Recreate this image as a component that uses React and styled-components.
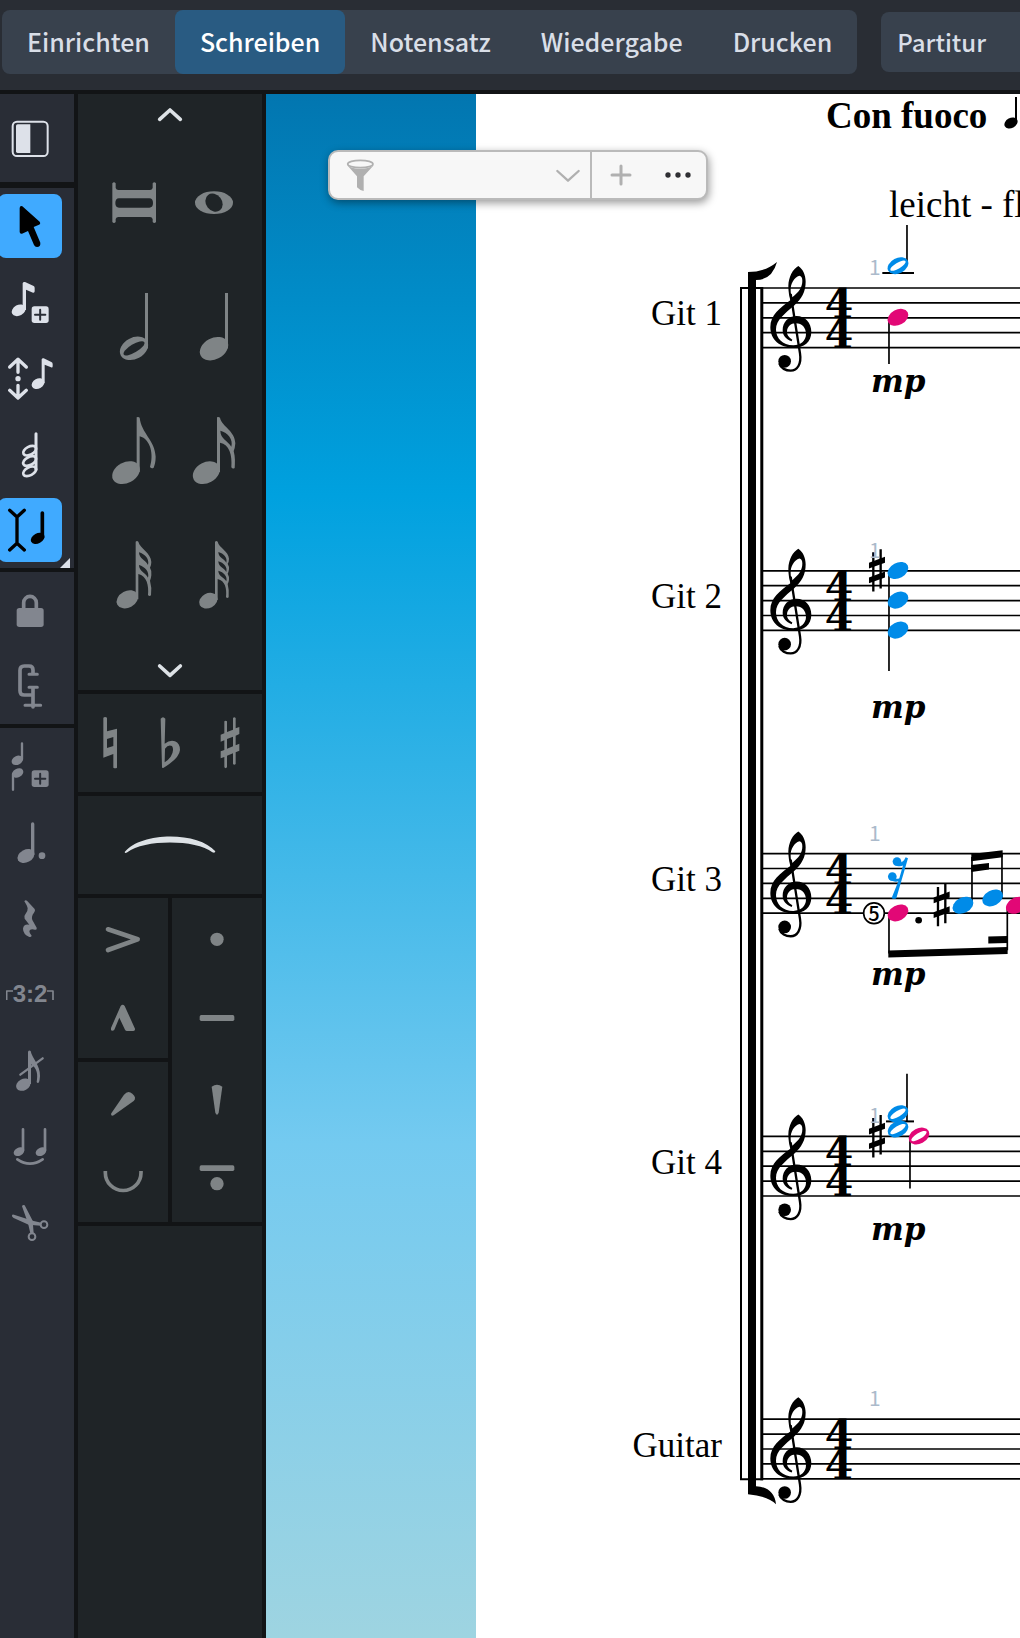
import React from 'react';
import styled, { createGlobalStyle } from 'styled-components';

const GlobalStyle = createGlobalStyle`
  * {
    box-sizing: border-box;
  }
  body {
    margin: 0;
    background: #121416;
    font-family: "Noto Sans CJK SC", "Noto Sans", sans-serif;
  }
  button, select, input {
    font: inherit;
    color: inherit;
    border: 0;
    margin: 0;
    padding: 0;
    background: none;
  }
  svg {
    display: block;
    flex-shrink: 0;
  }
`;

const Window = styled.div`
  display: flex;
  flex-direction: column;
  min-height: 100vh;
  overflow: hidden;
`;

const TopBar = styled.header`
  display: flex;
  align-items: center;
  gap: 24px;
  height: 94px;
  padding: 0 0 6px 2px;
  background: #292d34;
  border-bottom: 4px solid #121416;
  overflow: hidden;
`;

const Tabs = styled.nav`
  display: flex;
  flex-shrink: 0;
  border-radius: 8px;
  background: #38414d;
`;

const Tab = styled.button`
  height: 64px;
  padding: 0 25px 2px;
  border-radius: 8px;
  font-size: 25px;
  font-weight: 500;
  line-height: 32px;
  color: ${(p) => (p.$active ? '#ffffff' : '#d9dee7')};
  background: ${(p) => (p.$active ? '#295b82' : 'transparent')};
`;

const LayoutSelect = styled.select`
  appearance: none;
  flex: 1 0 240px;
  height: 60px;
  padding: 0 16px 2px;
  border-radius: 8px;
  font-size: 24px;
  font-weight: 500;
  color: #d9dee7;
  background: #38414d;
`;

const Main = styled.main`
  display: flex;
  flex: 1;
  gap: 4px;
`;

const Toolbox = styled.div`
  display: flex;
  flex-direction: column;
  gap: 4px;
  width: 74px;
  flex-shrink: 0;
`;

const ToolGroup = styled.div`
  position: relative;
  display: flex;
  flex-direction: column;
  gap: 12px;
  padding: ${(p) => (p.$roomy ? '12px 0' : '6px 0')};
  margin-bottom: ${(p) => (p.$roomy ? '2px' : '0')};
  flex: ${(p) => (p.$grow ? 1 : 'none')};
  background: #292d36;
`;

const Tool = styled.button`
  display: flex;
  align-items: center;
  justify-content: center;
  width: 64px;
  height: 64px;
  margin-left: -2px;
  border-radius: 8px;
  background: ${(p) => (p.$active ? '#40aaff' : 'transparent')};
  color: ${(p) => (p.$active ? '#000000' : p.disabled ? '#82868f' : '#dde1e9')};
`;

const Corner = styled.span`
  position: absolute;
  right: 4px;
  bottom: 0;
  border-left: 10px solid transparent;
  border-bottom: 10px solid #dde1e9;
`;

const TupletText = styled.span`
  font-family: "Liberation Sans", Arial, sans-serif;
  font-size: 24px;
  font-weight: 700;
  line-height: 24px;
`;

const Palette = styled.div`
  display: flex;
  flex-direction: column;
  gap: 4px;
  width: 184px;
  flex-shrink: 0;
`;

const Box = styled.div`
  display: flex;
  flex-direction: ${(p) => (p.$row ? 'row' : 'column')};
  align-items: center;
  justify-content: center;
  flex: ${(p) => (p.$grow ? 1 : 'none')};
  background: #1f2427;
`;

const NoteBox = styled(Box)`
  height: 596px;
  padding-top: 2px;
  justify-content: flex-start;
`;

const NoteGrid = styled.div`
  display: grid;
  grid-template-columns: 80px 80px;
  margin: 7px 0 15px 8px;
`;

const Cell = styled.button`
  color: #7f8486;
`;

const Arrow = styled.button`
  width: 184px;
  height: 38px;
  color: #dde2e6;

  svg {
    margin: 0 auto;
  }
`;

const Articulations = styled.div`
  display: grid;
  grid-template-columns: 90px 90px;
  gap: 4px;
`;

const Column = styled.div`
  display: flex;
  flex-direction: column;
  gap: 4px;
`;

const Canvas = styled.section`
  position: relative;
  display: flex;
  flex: 1;
  min-width: 0;
  padding-left: 210px;
  overflow: hidden;
  background: linear-gradient(#0276b0 0%, #00a1df 26%, #74caf0 68%, #9ed4e1 100%);
`;

const Sheet = styled.div`
  display: flex;
  flex: 1;
  min-width: 0;
  background: #ffffff;
`;

const Players = styled.div`
  width: 246px;
  flex-shrink: 0;
  padding-top: 78px;
  margin-right: 14px;
`;

const Player = styled.div`
  display: flex;
  align-items: center;
  justify-content: flex-end;
  height: 283px;
  font-family: "Liberation Serif", "Times New Roman", serif;
  font-size: 35px;
  line-height: 36px;
  color: #000000;
`;

const Score = styled.svg`
  flex: 1;
  min-width: 0;
  height: 1480px;
`;

const FilterBar = styled.div`
  position: absolute;
  top: 56px;
  left: 62px;
  display: flex;
  width: 380px;
  height: 50px;
  border: 2px solid #bababa;
  border-radius: 10px;
  background: #f7f7f7;
  box-shadow: 1px 3px 8px rgba(0, 0, 0, 0.4);
  color: #b0b0b0;
`;

const FilterField = styled.label`
  display: flex;
  align-items: center;
  flex: 1;
  min-width: 0;
  padding: 0 9px 0 16px;
  border-right: 2px solid #bababa;
`;

const FilterInput = styled.input`
  flex: 1;
  min-width: 0;
  height: 40px;
  padding: 0 8px;
  font-size: 20px;
  outline: none;
`;

const FilterButton = styled.button`
  display: flex;
  align-items: center;
  justify-content: center;
  flex-shrink: 0;
  width: ${(p) => (p.$small ? '26px' : '57px')};
`;

// All icons are drawn on a grid three times finer than the screen.
const Icon = ({ x, y, w, h, children }) => (
  <svg width={w} height={h} viewBox={`${x} ${y} ${w * 3} ${h * 3}`} fill="currentColor" aria-hidden="true">
    {children}
  </svg>
);

const Line = (props) => (
  <path fill="none" stroke="currentColor" strokeLinecap="round" strokeLinejoin="round" {...props} />
);

const Head = ({ x, y, rx = 33, ry = 23, fill, half, hole = '#fff' }) => (
  <g transform={`translate(${x} ${y})`}>
    <ellipse rx={rx} ry={ry} transform="rotate(-28)" fill={fill} />
    {half && <ellipse rx={rx * 0.8} ry={ry * 0.38} transform="rotate(-31)" fill={hole} />}
  </g>
);

const PlusBox = ({ y }) => (
  <g>
    <rect x="95" y={y} width="51" height="50" rx="8" />
    <path d={`M120.500 ${y + 10}v30M105 ${y + 25}h31`} stroke="#292d36" strokeWidth="6" strokeLinecap="round" />
  </g>
);

const tools = [
  {
    roomy: true,
    items: [
      {
        name: 'Panel',
        y: 48,
        icon: (
          <>
            <rect x="38" y="95" width="105" height="103" rx="13" fill="none" stroke="currentColor" strokeWidth="6" />
            <path d="M53 103H91V189H53Q48 189 48 184V108Q48 103 53 103Z" />
          </>
        ),
      },
    ],
  },
  {
    corner: true,
    items: [
      {
        name: 'Auswahl',
        active: true,
        y: 312,
        icon: <path d="M59 354Q60 346 67 349L119 395Q123 401 117 404L101 411L121 458Q122 471 111 471Q105 471 102 465L84 423L66 431Q59 432 59 426Z" />,
      },
      {
        name: 'Noteneingabe',
        y: 540,
        icon: (
          <>
            <Head x={56} y={661} rx={22} ry={16} />
            <path d="M68 660V580Q69 575 75 576L101 588Q104 590 104 594V604Q104 609 99 608L78 599V660Z" />
            <PlusBox y={649} />
          </>
        ),
      },
      {
        name: 'Tonhöhe',
        y: 768,
        icon: (
          <>
            <Line strokeWidth="10" d="M29 831L54 808L79 831M54 812V847M29 901L54 924L79 901M54 886V920" />
            <circle cx="54" cy="866" r="8" />
            <Head x={114} y={881} rx={20} ry={15} />
            <path d="M125 880V808Q126 804 131 805L154 816Q158 818 158 822V829Q158 834 153 832L134 824V880Z" />
          </>
        ),
      },
      {
        name: 'Akkord',
        y: 96,
        icon: (
          <>
            <Line strokeWidth="9" d="M108 131V238" />
            {[182, 213, 244].map((cy) => (
              <ellipse key={cy} rx="21" ry="12" transform={`translate(89 ${cy}) rotate(-28)`} fill="none" stroke="currentColor" strokeWidth="8" />
            ))}
          </>
        ),
      },
      {
        name: 'Einfügen',
        active: true,
        y: 324,
        icon: (
          <>
            <Line strokeWidth="10" d="M29 361L51 381L73 361M51 381V460M29 480L51 460L73 480" />
            <Head x={113} y={445} rx={22} ry={15} />
            <Line strokeWidth="11" d="M127 369V442" />
          </>
        ),
      },
    ],
  },
  {
    items: [
      {
        name: 'Sperren',
        disabled: true,
        y: 564,
        icon: (
          <>
            <rect x="50" y="654" width="81" height="57" rx="8" />
            <Line strokeWidth="11" d="M71 656V638A19 19 0 0 1 109 638V656" />
          </>
        ),
      },
      {
        name: 'Klammer',
        disabled: true,
        y: 792,
        icon: (
          <>
            <Line strokeWidth="11" d="M99 850V840Q99 828 87 828H73Q60 828 60 841V902Q60 915 73 915H98M99 894V951" />
            <Line strokeWidth="9" d="M87 853H112M87 892H112M75 946H122" />
          </>
        ),
      },
    ],
  },
  {
    grow: true,
    items: [
      {
        name: 'Stimme',
        disabled: true,
        y: 132,
        icon: (
          <>
            <Head x={52} y={211} rx={18} ry={13} />
            <Line strokeWidth="7" d="M66 160V208M39 252V299" />
            <Head x={53} y={249} rx={18} ry={13} />
            <PlusBox y={241} />
          </>
        ),
      },
      {
        name: 'Punktierung',
        disabled: true,
        y: 360,
        icon: (
          <>
            <Head x={78} y={498} rx={27} ry={19} />
            <Line strokeWidth="10" d="M98 402V493" />
            <circle cx="126" cy="497" r="10" />
          </>
        ),
      },
      {
        name: 'Pause',
        disabled: true,
        y: 588,
        icon: (
          <path d="M73 634Q76 628 81 632L104 657Q107 662 102 668Q93 679 97 690L110 713Q112 720 105 719Q90 715 88 723Q88 730 95 737Q94 742 88 741Q69 732 69 716Q71 701 88 704L74 686Q70 680 76 673Q84 664 83 655Q82 648 73 634Z" />
        ),
      },
      { name: 'Tuplet', disabled: true, tuplet: true },
      {
        name: 'Vorschlag',
        disabled: true,
        y: 264,
        icon: (
          <>
            <Head x={70} y={404} rx={23} ry={17} />
            <path d="M84 402V305Q87 299 92 303C96 325 121 345 120 378Q119 392 117 397Q113 401 110 396C114 375 112 355 93 343V402Z" />
            <Line strokeWidth="7" d="M61 374L128 325" />
          </>
        ),
      },
      {
        name: 'Haltebogen',
        disabled: true,
        y: 492,
        icon: (
          <>
            <Head x={57} y={605} rx={17} ry={12} />
            <Head x={123} y={605} rx={17} ry={12} />
            <Line strokeWidth="8" d="M69 538V600M135 538V600M52 628Q90 654 128 628" />
          </>
        ),
      },
      {
        name: 'Schere',
        disabled: true,
        y: 720,
        icon: (
          <>
            <path d="M36 796Q37 792 42 794L98 812L124 818L122 827L86 824L41 804Q35 801 36 796Z" />
            <path d="M66 769Q68 763 74 766L98 812L101 850L91 850L84 820Z" />
            <g fill="none" stroke="currentColor" strokeWidth="6">
              <circle cx="132" cy="824" r="10" />
              <circle cx="96" cy="860" r="10" />
            </g>
          </>
        ),
      },
    ],
  },
];

const notes = [
  {
    name: 'Brevis',
    y: 153,
    icon: (
      <path
        fillRule="evenodd"
        d="M337 280Q342 274 347 280V294Q349 300 355 300H450Q456 300 458 294V280Q463 274 468 280V396Q463 402 458 396V387Q456 381 450 381H355Q349 381 347 387V396Q342 402 337 396ZM357 325Q346 325 346 339Q346 353 357 353H448Q459 353 459 339Q459 325 448 325Z"
      />
    ),
  },
  {
    name: 'Ganze',
    y: 153,
    icon: (
      <>
        <ellipse cx="642" cy="338" rx="57" ry="34" />
        <ellipse rx="24" ry="29" transform="translate(642 338) rotate(-38)" fill="#1f2427" />
      </>
    ),
  },
  {
    name: 'Halbe',
    y: 525,
    icon: (
      <>
        <path d="M435 609H444V775H435Z" />
        <Head x={402} y={775} rx={45} ry={32} half hole="#1f2427" />
      </>
    ),
  },
  {
    name: 'Viertel',
    y: 525,
    icon: (
      <>
        <path d="M675 609H684V775H675Z" />
        <Head x={642} y={776} rx={45} ry={32} />
      </>
    ),
  },
  {
    name: 'Achtel',
    y: -3,
    icon: (
      <>
        <Head x={378} y={248} rx={44} ry={31} />
        <path d="M410 82Q415 79 419 83C424 130 465 150 467 200C467 215 464 225 461 233Q455 237 450 231C462 195 452 147 419 139V246H410Z" />
      </>
    ),
  },
  {
    name: 'Sechzehntel',
    y: -3,
    icon: (
      <>
        <Head x={619} y={248} rx={43} ry={31} />
        <path
          fillRule="evenodd"
          d="M651 82Q656 79 660 83C666 110 705 122 706 160Q705 175 701 183C706 200 705 220 704 234Q698 238 694 232C697 195 688 162 660 158V246H651ZM661 122C662 148 682 150 694 170C700 148 684 128 661 122Z"
        />
      </>
    ),
  },
  {
    name: '32tel',
    y: 369,
    icon: (
      <>
        <Head x={382} y={628} rx={34} ry={25} />
        <path
          fillRule="evenodd"
          d="M407 455Q411 451 415 455C420 475 453 488 454 516Q454 526 450 533Q456 542 454 556Q453 566 450 572Q456 592 453 616Q448 620 444 615C447 586 440 558 415 552V628H407ZM417 487C418 507 435 508 444 525C449 508 435 492 417 487ZM417 525C418 545 435 546 444 563C449 546 435 530 417 525Z"
        />
      </>
    ),
  },
  {
    name: '64tel',
    y: 369,
    icon: (
      <>
        <Head x={625} y={632} rx={29} ry={22} />
        <path
          fillRule="evenodd"
          d="M645 455Q650 451 653 455C657 473 686 484 687 506Q687 515 683 521Q688 529 687 538Q686 546 683 551Q688 559 687 569Q686 577 683 582Q688 600 686 622Q681 626 678 621C681 595 675 572 653 567V630H645ZM655 486C656 503 670 504 679 518C683 503 671 490 655 486ZM655 514C656 531 670 532 679 546C683 531 671 518 655 514ZM655 542C656 559 670 560 679 574C683 559 671 546 655 542Z"
        />
      </>
    ),
  },
];

const accidentals = [
  { name: 'Auflöser', d: 'M310 83Q315 79 321 83V124L351 116V233Q346 237 340 233V192L310 203ZM321 147L340 141V168L321 174Z' },
  {
    name: 'B',
    d: 'M482 86Q489 77 496 86L494 161Q510 149 525 154Q540 160 540 180Q538 205 491 233Q486 236 486 231ZM495 176Q505 162 516 168Q524 180 512 200Q505 210 494 217Z',
  },
  {
    name: 'Kreuz',
    d: 'M673 94Q677 90 681 94V126L699 119V84Q703 79 707 84V115L718 111V132L707 137V166L718 161V182L707 187V222Q703 227 699 222V190L681 197V232Q677 237 673 232V201L662 205V184L673 180V151L662 155V134L673 130ZM681 147V176L699 169V140Z',
  },
];

const articulationsLeft = [
  [
    { name: 'Akzent', y: 624, icon: <Line strokeWidth="14" d="M324 718L413 748L324 780" /> },
    { name: 'Marcato', y: 84, icon: <path d="M362 168Q368 160 374 168L405 236Q406 243 400 243H381Q377 243 375 239L358 203L343 239Q339 244 333 241V234Z" /> },
  ],
  [
    { name: 'Betont', y: 336, icon: <path d="M333 491L372 434Q384 420 397 431Q411 443 401 453L341 496Q333 500 333 491Z" /> },
    { name: 'Unbetont', y: 576, icon: <path fill="none" stroke="currentColor" strokeWidth="11" d="M316 663V668A53 53 0 0 0 423 668V663" /> },
  ],
];

const articulationsRight = [
  { name: 'Staccato', y: 624, icon: <circle cx="651" cy="748" r="20" /> },
  { name: 'Tenuto', y: 87, icon: <rect x="599" y="195" width="104" height="18" rx="5" /> },
  { name: 'Staccatissimo', y: 330, icon: <path d="M635 410Q651 398 667 410L656 488Q651 500 646 488Z" /> },
  {
    name: 'Portato',
    y: 573,
    icon: (
      <>
        <rect x="599" y="646" width="104" height="17" rx="5" />
        <circle cx="651" cy="701" r="20" />
      </>
    ),
  },
];

const BLUE = '#008be8';
const PINK = '#e20876';
const STAFF_TOP = 194;
const STAFF_PITCH = 282.8;

const Clef = () => (
  <g transform="translate(0 -324)">
    <path
      fillRule="evenodd"
      d="M205 258C188 268 176 290 175 318C175 335 178 350 181 361C150 384 121 405 121 442C121 480 150 503 190 503C222 503 244 487 244 455C244 428 225 408 200 408C175 408 158 427 158 450C158 467 168 478 185 484L187 479C175 472 170 464 171 454C172 440 182 430 197 430C217 430 228 444 228 462C228 482 212 496 190 496C157 496 138 475 138 448C138 420 165 400 192 377C215 356 227 335 227 305C227 285 218 266 205 258ZM208 287C193 292 181 310 182 332C182 340 184 346 187 352C207 335 217 322 217 302C217 293 214 288 208 287Z"
    />
    <path d="M182 342L210 520C215 552 202 572 182 572C168 572 152 565 148 550" fill="none" stroke="#000" strokeWidth="7" />
    <circle cx="164" cy="544" r="19" />
  </g>
);

const Sharp = ({ x, y }) => (
  <g transform={`translate(${x} ${y})`}>
    <path d="M-11 -55V63M11 -64V54" stroke="#000" strokeWidth="7" />
    <path d="M-24 -23L24 -41V-23L-24 -6ZM-24 21L24 3V21L-24 38Z" />
  </g>
);

const Stems = ({ d, w = 5 }) => <path d={d} fill="none" stroke="#000" strokeWidth={w} />;

const staves = [
  {
    label: 'Git 1',
    dynamic: 104,
    music: (
      <>
        <Stems d="M531 -189V-70M477 92V228" />
        <Stems w={6} d="M457 -45H552" />
        <Head x={504} y={-67} fill={BLUE} half />
        <Head x={504} y={88} fill={PINK} />
      </>
    ),
  },
  {
    label: 'Git 2',
    dynamic: 147,
    music: (
      <>
        <Stems d="M477 4V301" />
        <Sharp x={441} y={-1} />
        <Head x={504} y={-1} fill={BLUE} />
        <Head x={504} y={88} fill={BLUE} />
        <Head x={504} y={178} fill={BLUE} />
      </>
    ),
  },
  {
    label: 'Git 3',
    dynamic: 131,
    music: (
      <>
        <Stems d="M477 180V300M832 160V290M726 10V155M816 0V133" />
        <path d="M475 291L833 280V301L475 312ZM775 249L833 247V268L775 270ZM724 1L818 -10V11L724 23ZM724 34L777 28V48L724 55Z" />
        <g fill={BLUE}>
          <circle cx="501" cy="24" r="13" />
          <circle cx="487" cy="69" r="13" />
          <path d="M499 134L534 14L527 11Q519 30 502 26L501 37Q511 40 519 36L508 74Q500 78 488 72V82Q497 86 505 83L485 133Q491 138 499 134Z" />
        </g>
        <circle cx="432" cy="179" r="31" fill="#fff" stroke="#000" strokeWidth="5" />
        <circle cx="566" cy="200" r="10" />
        <Sharp x={635} y={155} />
        <Head x={504} y={178} fill={PINK} />
        <Head x={699} y={155} fill={BLUE} />
        <Head x={788} y={133} fill={BLUE} />
        <Head x={859} y={155} fill={PINK} />
      </>
    ),
    fingering: '5',
  },
  {
    label: 'Git 4',
    dynamic: 104,
    music: (
      <>
        <Stems d="M531 -188V-45M540 4V156" />
        <Stems w={6} d="M468 -45H552" />
        <Sharp x={441} y={0} />
        <Head x={504} y={-68} fill={BLUE} half />
        <Head x={504} y={-22} fill={BLUE} half />
        <Head x={567} y={-1} fill={PINK} half />
      </>
    ),
  },
  { label: 'Guitar' },
];

const Staff = ({ index, music, dynamic, fingering }) => (
  <g transform={`translate(0 ${STAFF_TOP + index * STAFF_PITCH})`}>
    {[0, 1, 2, 3, 4].map((n) => (
      <line key={n} x1="27" x2="100%" y1={n * 14.9} y2={n * 14.9} stroke="#000" strokeWidth="1.700" />
    ))}
    <g transform="translate(-6 0) scale(0.3333)">
      <Clef />
      {music}
    </g>
    <g fontFamily='"DejaVu Serif", serif' fontSize="41" fontWeight="700" textAnchor="middle">
      <text x="103" y="30">4</text>
      <text x="103" y="60">4</text>
    </g>
    <text x="133" y="-13" fill="#abbacb" fontSize="21">1</text>
    {dynamic && (
      <text x="135" y={dynamic} fontFamily='"DejaVu Serif", serif' fontSize="31" fontWeight="700" fontStyle="italic">
        mp
      </text>
    )}
    {fingering && (
      <text x="138" y="67" fontSize="20" fontWeight="500" textAnchor="middle">
        {fingering}
      </text>
    )}
  </g>
);

const END = STAFF_TOP + 4 * STAFF_PITCH + 60;

const App = () => {
  return (
    <>
      <GlobalStyle />
      <Window>
        <TopBar>
          <Tabs>
            {['Einrichten', 'Schreiben', 'Notensatz', 'Wiedergabe', 'Drucken'].map((t) => (
              <Tab key={t} $active={t === 'Schreiben'}>{t}</Tab>
            ))}
          </Tabs>
          <LayoutSelect aria-label="Layout">
            <option>Partitur</option>
          </LayoutSelect>
        </TopBar>

        <Main>
          <Toolbox>
            {tools.map((group, i) => (
              <ToolGroup key={i} $roomy={group.roomy} $grow={group.grow}>
                {group.items.map((t) => (
                  <Tool key={t.name} aria-label={t.name} disabled={t.disabled} $active={t.active}>
                    {t.tuplet ? (
                      <>
                        <Icon x={18} y={122} w={7} h={14}><Line strokeWidth="5" strokeLinecap="butt" d="M20 161V134H39" /></Icon>
                        <TupletText>3:2</TupletText>
                        <Icon x={141} y={122} w={7} h={14}><Line strokeWidth="5" strokeLinecap="butt" d="M141 134H159V161" /></Icon>
                      </>
                    ) : (
                      <Icon x={-6} y={t.y} w={64} h={64}>{t.icon}</Icon>
                    )}
                  </Tool>
                ))}
                {group.corner && <Corner />}
              </ToolGroup>
            ))}
          </Toolbox>

          <Palette>
            <NoteBox>
              <Arrow aria-label="Kürzer">
                <Icon x={468} y={39} w={28} h={24}><Line strokeWidth="11" d="M479 88L510 60L541 88" /></Icon>
              </Arrow>
              <NoteGrid>
                {notes.map((n, i) => (
                  <Cell key={n.name} aria-label={n.name}>
                    <Icon x={i % 2 ? 522 : 282} y={n.y} w={80} h={124}>{n.icon}</Icon>
                  </Cell>
                ))}
              </NoteGrid>
              <Arrow aria-label="Länger">
                <Icon x={468} y={806} w={28} h={24}><Line strokeWidth="11" d="M479 827L510 855L541 827" /></Icon>
              </Arrow>
            </NoteBox>
            <Box $row>
              {accidentals.map((a, i) => (
                <Cell key={a.name} aria-label={a.name}>
                  <Icon x={240 + i * 180} y={12} w={60} h={98}><path fillRule="evenodd" d={a.d} /></Icon>
                </Cell>
              ))}
            </Box>
            <Box>
              <Cell aria-label="Bogen">
                <Icon x={234} y={318} w={184} h={98}>
                  <path fill="#dde2e6" d="M374 486C424 424 596 424 646 484Q645 491 637 487C588 448 432 448 382 487Q375 491 374 486Z" />
                </Icon>
              </Cell>
            </Box>
            <Articulations>
              <Column>
                {articulationsLeft.map((items, i) => (
                  <Box key={i}>
                    {items.map((a) => (
                      <Cell key={a.name} aria-label={a.name}>
                        <Icon x={234} y={a.y} w={90} h={80}>{a.icon}</Icon>
                      </Cell>
                    ))}
                  </Box>
                ))}
              </Column>
              <Box>
                {articulationsRight.map((a) => (
                  <Cell key={a.name} aria-label={a.name}>
                    <Icon x={516} y={a.y} w={90} h={81}>{a.icon}</Icon>
                  </Cell>
                ))}
              </Box>
            </Articulations>
            <Box $grow />
          </Palette>

          <Canvas>
            <Sheet>
              <Players>
                {staves.map((s) => <Player key={s.label}>{s.label}</Player>)}
              </Players>
              <Score>
                <g fontFamily='"Liberation Serif", serif' fontSize="37">
                  <text x="90" y="34" fontWeight="700">Con fuoco</text>
                  <text x="153" y="123">leicht - fl</text>
                </g>
                <ellipse rx="7" ry="5" transform="translate(275 29) rotate(-28)" />
                <path d="M280 3V27" stroke="#000" strokeWidth="2" />
                {/* system bracket */}
                <path d={`M27 ${STAFF_TOP}H5V${END}H27`} fill="none" stroke="#000" strokeWidth="2" />
                <path d={`M25.800 ${STAFF_TOP - 1}V${END + 1}`} stroke="#000" strokeWidth="3" />
                <path d={`M12 ${STAFF_TOP - 15}H20V${END + 14}H12Z`} />
                <path d={`M12 ${STAFF_TOP - 16}Q29 ${STAFF_TOP - 16} 41 ${STAFF_TOP - 26}Q36 ${STAFF_TOP - 8} 20 ${STAFF_TOP - 8}H12Z`} />
                <path d={`M12 ${END + 15}Q32 ${END + 17} 40 ${END + 25}Q38 ${END + 8} 20 ${END + 7}H12Z`} />
                {staves.map((s, i) => <Staff key={s.label} index={i} {...s} />)}
              </Score>
            </Sheet>

            <FilterBar>
              <FilterField>
                <Icon x={287} y={88} w={29} h={33}>
                  <ellipse cx="330" cy="103" rx="38" ry="11" fill="none" stroke="currentColor" strokeWidth="5" />
                  <path d="M290 106Q300 117 330 117Q360 117 371 106L340 140V184Q327 181 320 173V140Z" />
                </Icon>
                <FilterInput aria-label="Filter" />
                <FilterButton $small aria-label="Filter wählen">
                  <Icon x={915} y={110} w={26} h={17}><Line strokeWidth="7" d="M922 122L954 151L986 122" /></Icon>
                </FilterButton>
              </FilterField>
              <FilterButton aria-label="Hinzufügen">
                <Icon x={0} y={0} w={22} h={22}><Line strokeWidth="9" d="M33 6V60M6 33H60" /></Icon>
              </FilterButton>
              <FilterButton aria-label="Mehr">
                <Icon x={0} y={0} w={28} h={8}>
                  <g fill="#2f2f33">
                    <circle cx="12" cy="12" r="8" />
                    <circle cx="42" cy="12" r="8" />
                    <circle cx="72" cy="12" r="8" />
                  </g>
                </Icon>
              </FilterButton>
            </FilterBar>
          </Canvas>
        </Main>
      </Window>
    </>
  );
};

export default App;
